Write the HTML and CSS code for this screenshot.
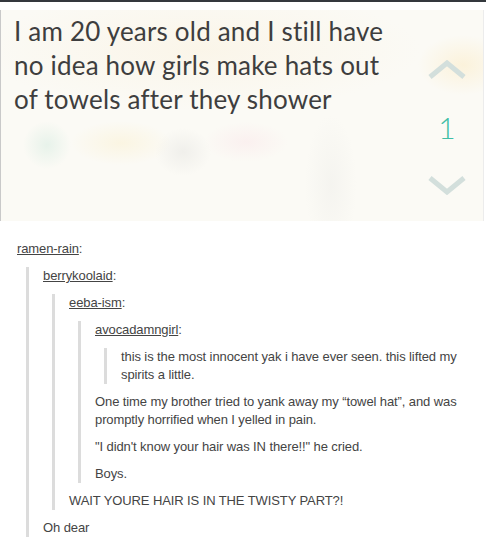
FILE: index.html
```html
<!DOCTYPE html>
<html>
<head>
<meta charset="utf-8">
<link rel="stylesheet" href="styles.css">
</head>
<body>
<div class="topbar"></div>
<div class="yak">
  <p class="yak-text">I am 20 years old and I still have<br>no idea how girls make hats out<br>of towels after they shower</p>
  <div class="vote">
    <svg class="chev up" width="40" height="20" viewBox="0 0 40 20"><polyline points="3,17 20,3 37,17" fill="none" stroke="#d3dfdc" stroke-width="5"/></svg>
    <span class="count">1</span>
    <svg class="chev down" width="40" height="20" viewBox="0 0 40 20"><polyline points="3,3 20,17 37,3" fill="none" stroke="#d3dfdc" stroke-width="5"/></svg>
  </div>
</div>
<div class="thread">
  <p><a href="#">ramen-rain</a>:</p>
  <blockquote>
    <p><a href="#">berrykoolaid</a>:</p>
    <blockquote>
      <p><a href="#">eeba-ism</a>:</p>
      <blockquote>
        <p><a href="#">avocadamngirl</a>:</p>
        <blockquote>
          <p>this is the most innocent yak i have ever seen. this lifted my spirits a little.</p>
        </blockquote>
        <p>One time my brother tried to yank away my “towel hat”, and was promptly horrified when I yelled in pain.</p>
        <p>"I didn't know your hair was IN there!!" he cried.</p>
        <p>Boys.</p>
      </blockquote>
      <p>WAIT YOURE HAIR IS IN THE TWISTY PART?!</p>
    </blockquote>
    <p>Oh dear</p>
  </blockquote>
</div>
</body>
</html>
```
FILE: styles.css
```css
html, body {
  margin: 0;
  padding: 0;
  background: #ffffff;
}
body {
  width: 486px;
}
.topbar {
  height: 2px;
  background: #34383d;
}
.yak {
  margin-top: 8px;
  width: 482px;
  height: 211px;
  display: flex;
  border-left: 1px solid #c9c9c9;
  border-right: 1px solid #ececec;
  background:
    radial-gradient(ellipse 45px 30px at 462px 55px, rgba(252, 230, 180, 0.4), rgba(252, 230, 180, 0) 100%),
    radial-gradient(ellipse 24px 24px at 46px 135px, rgba(160, 215, 195, 0.22), rgba(160, 215, 195, 0) 100%),
    radial-gradient(ellipse 50px 22px at 120px 133px, rgba(250, 230, 170, 0.25), rgba(250, 230, 170, 0) 100%),
    radial-gradient(ellipse 28px 24px at 182px 142px, rgba(190, 190, 190, 0.18), rgba(190, 190, 190, 0) 100%),
    radial-gradient(ellipse 42px 20px at 245px 132px, rgba(248, 205, 218, 0.22), rgba(248, 205, 218, 0) 100%),
    radial-gradient(ellipse 26px 70px at 330px 175px, rgba(200, 200, 200, 0.12), rgba(200, 200, 200, 0) 100%),
    radial-gradient(ellipse 220px 60px at 200px 40px, rgba(250, 242, 225, 0.6), rgba(250, 242, 225, 0) 100%),
    #fbfaf5;
}
.yak-text {
  flex: 1;
  margin: 0;
  padding: 4px 0 0 13px;
  font-family: Lato, "Open Sans", sans-serif;
  font-size: 26px;
  line-height: 34px;
  letter-spacing: 0.2px;
  color: #3e3e3e;
}
.vote {
  width: 40px;
  margin-right: 16px;
  display: flex;
  flex-direction: column;
  align-items: center;
  padding-top: 50px;
}
.chev {
  display: block;
}
.count {
  margin-top: 32px;
  font-family: Lato, sans-serif;
  font-weight: 300;
  font-size: 30px;
  line-height: 30px;
  color: #3fbea5;
}
.chev.down {
  margin-top: 33px;
}
.thread {
  padding: 19px 17px 0 17px;
  font-family: "Liberation Sans", Arial, sans-serif;
  font-size: 13px;
  line-height: 18px;
  letter-spacing: -0.1px;
  color: #444444;
}
.thread p {
  margin: 0 0 9px 0;
}
.thread blockquote {
  margin: 0 0 9px 9px;
  padding-left: 14px;
  border-left: 3px solid #dcdcdc;
}
.thread blockquote > :last-child,
.thread > :last-child {
  margin-bottom: 0;
}
.thread a {
  color: #444444;
  text-decoration: underline;
}
```
